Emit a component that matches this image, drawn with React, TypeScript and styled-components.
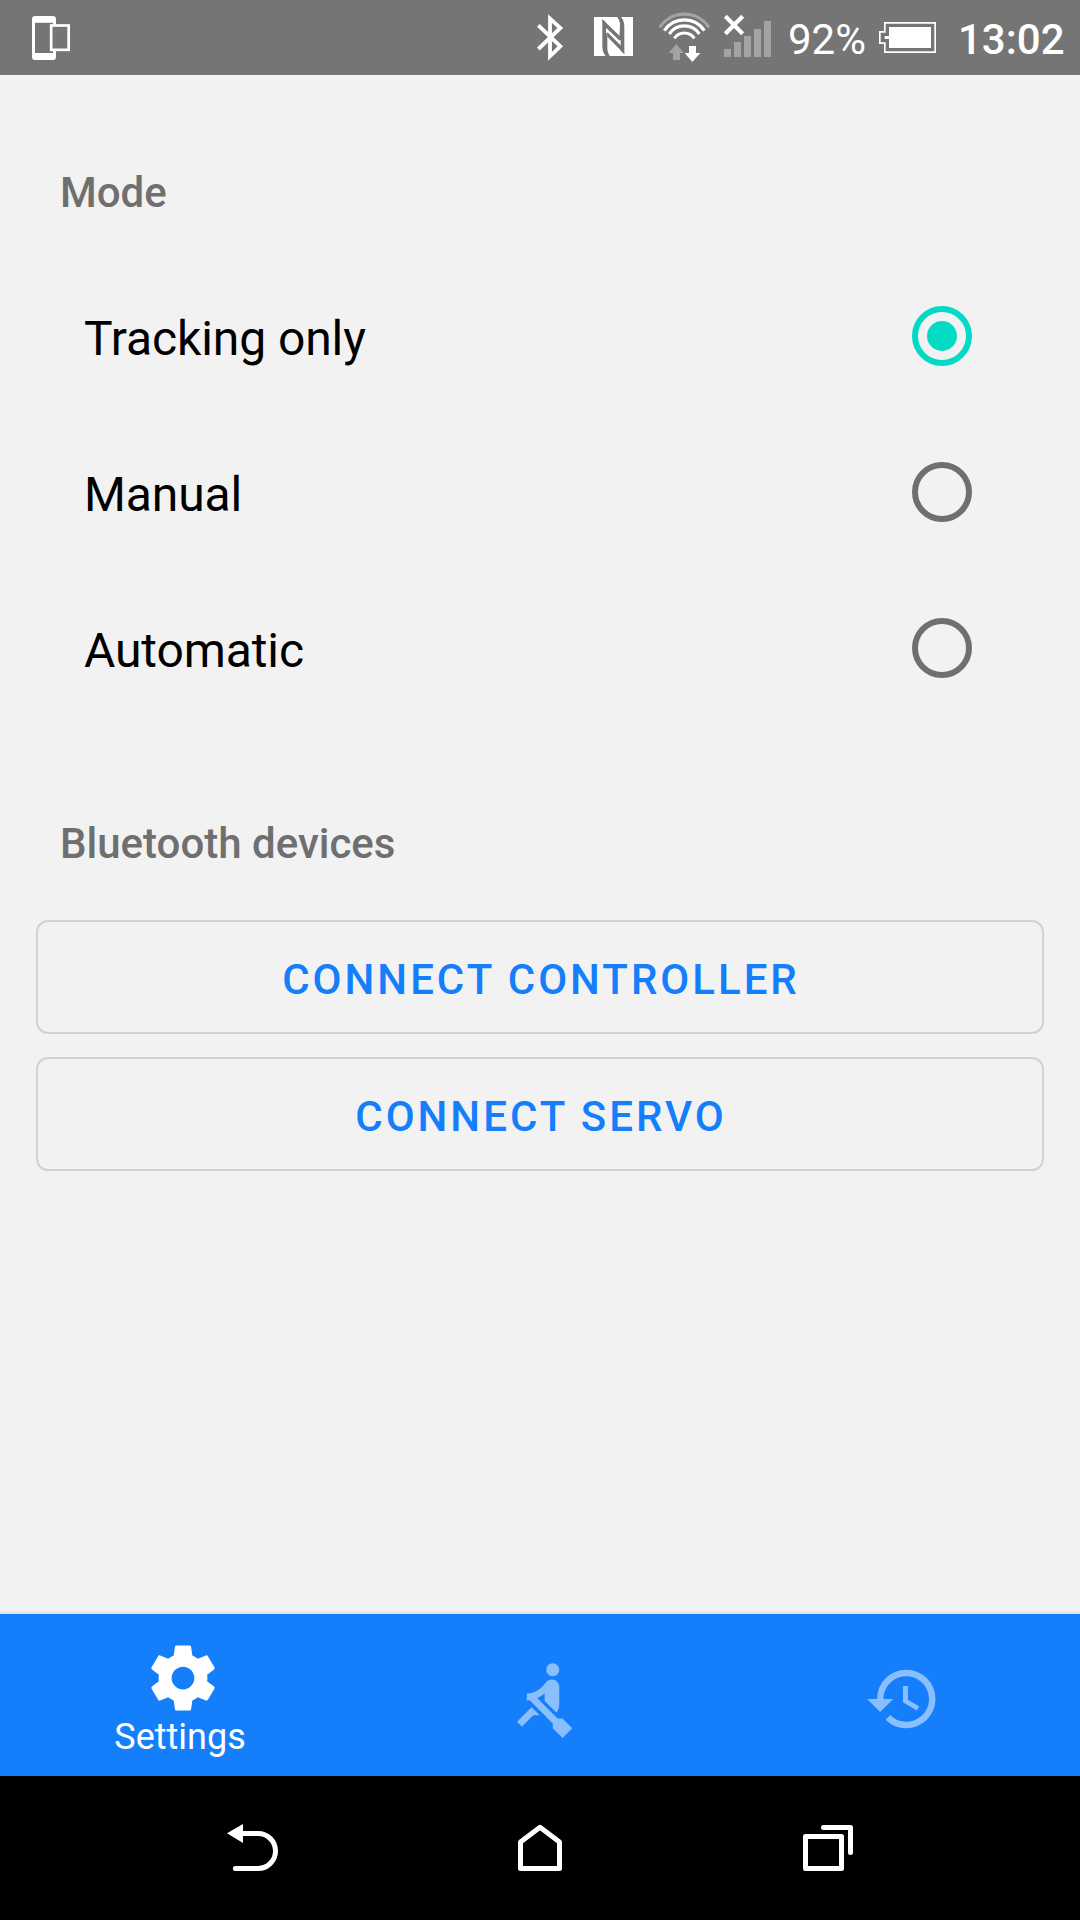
import React, { useState } from "react";
import styled, { createGlobalStyle } from "styled-components";

const GlobalStyle = createGlobalStyle`
  * { box-sizing: border-box; }
  body { margin: 0; background: #f2f2f2; }
  button { font: inherit; border: 0; background: none; padding: 0; margin: 0; }
`;

const Screen = styled.div`
  width: 1080px;
  height: 1920px;
  display: flex;
  flex-direction: column;
  background: #f2f2f2;
  font-family: Roboto, "Noto Sans", sans-serif;
  overflow: hidden;
`;

const StatusBar = styled.header`
  height: 75px;
  flex: none;
  display: flex;
  align-items: flex-start;
  background: #757575;
  color: #fff;
  padding-left: 32px;
`;

const Spacer = styled.div`
  flex: 1;
`;

const Glyph = styled.svg<{ $w: number; $gap?: number }>`
  display: block;
  flex: none;
  width: ${(p) => p.$w}px;
  height: 75px;
  margin-right: ${(p) => p.$gap ?? 0}px;
`;

const StatusText = styled.span<{ $width: number; $weight: number }>`
  width: ${(p) => p.$width}px;
  flex: none;
  font-size: 42px;
  font-weight: ${(p) => p.$weight};
  line-height: 50px;
  padding-top: 15px;
  white-space: nowrap;
`;

const Content = styled.main`
  flex: 1;
  display: flex;
  flex-direction: column;
  padding-top: 82px;
`;

const SectionTitle = styled.h2`
  margin: 0;
  padding-left: 60px;
  height: 72px;
  line-height: 72px;
  font-size: 42px;
  font-weight: 500;
  color: #6f6f6f;
`;

const RadioGroup = styled.div`
  display: flex;
  flex-direction: column;
  padding: 29px 108px 82px 84px;
`;

const RadioRow = styled.button`
  height: 156px;
  display: flex;
  align-items: center;
  justify-content: space-between;
  color: #000;
`;

const RadioLabel = styled.span`
  font-size: 48px;
  line-height: 56px;
  letter-spacing: -0.1px;
  padding-top: 6px;
`;

const Ring = styled.span<{ $on: boolean }>`
  width: 60px;
  height: 60px;
  border: 6px solid ${(p) => (p.$on ? "#03dac4" : "#6f6f6f")};
  border-radius: 50%;
  display: flex;
  align-items: center;
  justify-content: center;
`;

const Dot = styled.span`
  width: 30px;
  height: 30px;
  border-radius: 50%;
  background: #03dac4;
`;

const Actions = styled.div`
  display: flex;
  flex-direction: column;
  gap: 23px;
  padding: 40px 36px 0;
`;

const OutlinedButton = styled.button`
  && {
    height: 114px;
    border: 2px solid #d1d1d1;
    border-radius: 12px;
    display: flex;
    justify-content: center;
    align-items: center;
    padding: 5px 0 0 2px;
    font-size: 42px;
    font-weight: 500;
    letter-spacing: 3px;
    color: #147efb;
  }
`;

const TabBar = styled.nav`
  height: 162px;
  flex: none;
  display: flex;
  background: #147efb;
  box-shadow: 0 -1px 3px rgba(0, 0, 0, 0.12);
`;

const Tab = styled.button<{ $active: boolean }>`
  flex: 1;
  display: flex;
  flex-direction: column;
  align-items: center;
  justify-content: ${(p) => (p.$active ? "flex-start" : "center")};
  padding-top: ${(p) => (p.$active ? 25 : 8)}px;
  color: ${(p) => (p.$active ? "#fff" : "rgba(255, 255, 255, 0.5)")};
`;

const TabIcon = styled.svg`
  display: block;
  width: 78px;
  height: 78px;
  margin-left: 6px;
`;

const TabLabel = styled.span`
  font-size: 36px;
  line-height: 40px;
`;

const NavBar = styled.footer`
  height: 144px;
  flex: none;
  display: flex;
  justify-content: space-between;
  padding: 48px 225px 0 225px;
  background: #000;
`;

const NavIcon = styled.svg`
  display: block;
  width: 56px;
  height: 50px;
`;

const modes = ["Tracking only", "Manual", "Automatic"];
const devices = ["CONNECT CONTROLLER", "CONNECT SERVO"];

const tabs = [
  {
    name: "Settings",
    path: "M19.43 12.98c.04-.32.07-.64.07-.98s-.03-.66-.07-.98l2.11-1.65c.19-.15.24-.42.12-.64l-2-3.46c-.12-.22-.39-.3-.61-.22l-2.49 1c-.52-.4-1.08-.73-1.69-.98l-.38-2.65C14.46 2.18 14.25 2 14 2h-4c-.25 0-.46.18-.49.42l-.38 2.65c-.61.25-1.17.59-1.69.98l-2.49-1c-.23-.09-.49 0-.61.22l-2 3.46c-.13.22-.07.49.12.64l2.11 1.65c-.04.32-.07.65-.07.98s.03.66.07.98l-2.11 1.65c-.19.15-.24.42-.12.64l2 3.46c.12.22.39.3.61.22l2.49-1c.52.4 1.08.73 1.69.98l.38 2.65c.03.24.24.42.49.42h4c.25 0 .46-.18.49-.42l.38-2.65c.61-.25 1.17-.59 1.69-.98l2.49 1c.23.09.49 0 .61-.22l2-3.46c.12-.22.07-.49-.12-.64l-2.11-1.65zM12 15.5c-1.93 0-3.5-1.57-3.5-3.5s1.57-3.5 3.5-3.5 3.5 1.57 3.5 3.5-1.57 3.5-3.5 3.5z",
  },
  {
    name: "Rowing",
    path: "M8.5 14.5L4 19l1.5 1.5L9 17h2l-2.5-2.5zM15 1c-1.1 0-2 .9-2 2s.9 2 2 2 2-.9 2-2-.9-2-2-2zm6 20.01L18 24l-2.99-3.01V19.5l-7.1-7.09c-.31.05-.61.07-.91.07v-2.16c1.66.03 3.61-.87 4.67-2.04l1.4-1.55c.19-.21.43-.38.69-.5.29-.14.62-.23.96-.23h.03C15.99 6.01 17 7.02 17 8.26v5.75c0 .84-.35 1.61-.92 2.16l-3.58-3.58v-2.27c-.63.52-1.43 1.02-2.29 1.39L16.5 18H18l3 3.01z",
  },
  {
    name: "History",
    path: "M13 3a9 9 0 0 0-9 9H1l3.89 3.89.07.14L9 12H6c0-3.87 3.13-7 7-7s7 3.13 7 7-3.13 7-7 7c-1.93 0-3.68-.79-4.94-2.06l-1.42 1.42A8.954 8.954 0 0 0 13 21a9 9 0 0 0 0-18zm-1 5v5l4.28 2.54.72-1.21-3.5-2.08V8H12z",
  },
];

function StatusIcons() {
  return (
    <>
      <Glyph $w={28} $gap={30} viewBox="48 0 84 225" fill="none" stroke="#fff" strokeWidth="11.5">
        <path d="M55 76L121 139L90 169V56L121 84L55 147" strokeMiterlimit="10" />
      </Glyph>
      <Glyph $w={40} $gap={24} viewBox="222 0 120 225">
        <rect x="222" y="51" width="117" height="117" fill="#fff" />
        <g fill="#757575">
          <path d="M247 58L258 68V136Q258 158 268 168H257Q247 158 247 138Z" />
          <path d="M313 162L302 152V83Q302 61 292 51H303Q313 61 313 81Z" />
          <path d="M247 58L300 109V123L250 76Z" />
          <path d="M300 76Q300 60 292 51H300L307 70V120H298Z" />
          <path d="M313 162L262 110V96L310 144Z" />
          <path d="M262 100V140Q262 160 270 168H262L253 148V100Z" />
        </g>
      </Glyph>
      <Glyph $w={53} $gap={12} viewBox="414 0 159 225" fill="none" strokeWidth="9.5">
        <path d="M419 82A89 89 0 0 1 567 82" stroke="#a3a3a3" />
        <g stroke="#fff">
          <path d="M433 92A72 72 0 0 1 553 92" />
          <path d="M448 102A54 54 0 0 1 538 102" />
          <path d="M463 115A36 36 0 0 1 523 115" />
        </g>
        <path d="M446 159L469 132L492 159H480V180H459V159Z" fill="#a3a3a3" />
        <path d="M507 138H528V159H541L517 186L494 159H507Z" fill="#fff" />
      </Glyph>
      <Glyph $w={49} $gap={16} viewBox="609 0 147 225">
        <path d="M616 49L668 101M668 49L616 101" stroke="#fff" strokeWidth="12.5" />
        <path
          d="M612 147h21v24h-21zM642 126h21v45h-21zM672 108h21v63h-21zM702 87h21v84h-21zM732 63h21v108h-21z"
          fill="#a3a3a3"
        />
      </Glyph>
    </>
  );
}

export default function App() {
  const [mode, setMode] = useState(0);
  const [tab, setTab] = useState(0);

  return (
    <Screen>
      <GlobalStyle />
      <StatusBar>
        <Glyph $w={39} viewBox="96 0 117 225">
          <path fillRule="evenodd" d="M106 48H158Q168 48 168 58V170Q168 180 158 180H106Q96 180 96 170V58Q96 48 106 48ZM105 68V159H159V68Z" fill="#fff" />
          <rect x="153.500" y="76.500" width="52.500" height="73" fill="#757575" stroke="#fff" strokeWidth="8" />
        </Glyph>
        <Spacer />
        <StatusIcons />
        <StatusText $width={91} $weight={400}>92%</StatusText>
        <Glyph $w={57} $gap={22} viewBox="297 0 171 225">
          <path d="M314.500 95.500H299.500V129.500H314.500V156.500H465.500V68.500H314.500Z" fill="none" stroke="#fff" strokeWidth="5" />
          <path d="M327 81H453V144H327V117H314V108H327Z" fill="#fff" />
        </Glyph>
        <StatusText $width={122} $weight={500}>13:02</StatusText>
      </StatusBar>

      <Content>
        <SectionTitle>Mode</SectionTitle>
        <RadioGroup>
          {modes.map((label, i) => (
            <RadioRow key={label} onClick={() => setMode(i)}>
              <RadioLabel>{label}</RadioLabel>
              <Ring $on={mode === i}>{mode === i && <Dot />}</Ring>
            </RadioRow>
          ))}
        </RadioGroup>
        <SectionTitle>Bluetooth devices</SectionTitle>
        <Actions>
          {devices.map((label) => (
            <OutlinedButton key={label}>{label}</OutlinedButton>
          ))}
        </Actions>
      </Content>

      <TabBar>
        {tabs.map((t, i) => (
          <Tab key={t.name} $active={tab === i} onClick={() => setTab(i)} aria-label={t.name}>
            <TabIcon viewBox="0 0 24 24" fill="currentColor">
              <path d={t.path} />
            </TabIcon>
            {tab === i && <TabLabel>{t.name}</TabLabel>}
          </Tab>
        ))}
      </TabBar>

      <NavBar>
        <NavIcon viewBox="45 72 168 150" fill="none" stroke="#fff" strokeWidth="15" strokeLinecap="round">
          <path d="M92 100.500H144A52.500 52.500 0 0 1 144 205.500H76" />
          <path d="M51 100L99 72V129Z" fill="#fff" stroke="none" />
        </NavIcon>
        <NavIcon viewBox="906 72 168 150" fill="none" stroke="#fff" strokeWidth="15" strokeLinejoin="round">
          <path d="M931.500 126L990 82L1048.500 126V205.500H931.500Z" />
        </NavIcon>
        <NavIcon viewBox="57 72 168 150" fill="none" stroke="#fff" strokeWidth="15" strokeLinejoin="round" strokeLinecap="round">
          <path d="M76.500 109.500H184.500V205.500H76.500Z" />
          <path d="M130.500 82.500H211.500V157.500" />
        </NavIcon>
      </NavBar>
    </Screen>
  );
}
